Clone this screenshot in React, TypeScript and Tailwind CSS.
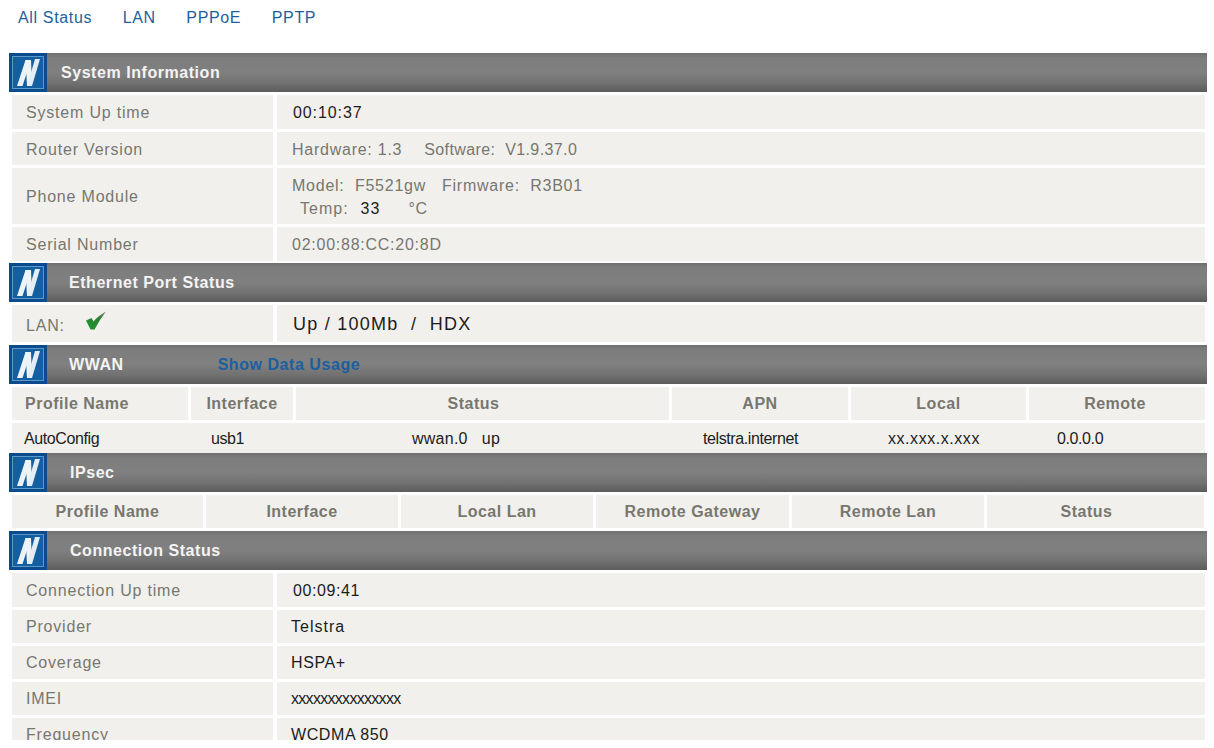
const Logo = () => (
  <svg width="38" height="39" viewBox="0 0 38 39" className="shrink-0 block">
    <rect width="38" height="39" fill="#0b4a8c" />
    <rect x="3.5" y="3.5" width="31" height="32" fill="#135f9f" stroke="#5c98c8" strokeWidth="1" />
    <path d="M8 33 L13.5 33 L22 7 L16.5 7 Z" fill="#eef3f8" />
    <path d="M16.5 7 L22 7 L23 33 L18 33 Z" fill="#eef3f8" />
    <path d="M18 33 L23 33 L31 6 L26 6 Z" fill="#e4ecf4" />
  </svg>
);

const Header = ({ title, indent, extra }: { title: string; indent: string; extra?: React.ReactNode }) => (
  <div className="flex h-[39px] w-[1198px] ml-[9px] items-center bg-[linear-gradient(to_bottom,#6f6f6f_0%,#7d7d7d_12%,#808080_50%,#707070_78%,#5c5c5c_100%)]">
    <Logo />
    <span className={`${indent} text-[16px] pt-[1px] font-bold text-[#f4f4f4] tracking-[0.55px] whitespace-nowrap`}>{title}</span>
    {extra}
  </div>
);

const Row = ({ label, h, children, tight = false }: { label: React.ReactNode; h: string; children: React.ReactNode; tight?: boolean }) => (
  <div className={`flex ${h} mt-[3px] ml-[12px] w-[1193px] gap-[4px]`}>
    <div className={`w-[261px] shrink-0 bg-[#f1f0ed] pl-[14px] ${tight ? "" : "pt-[2px]"} flex items-center text-[16px] text-[#77776f] tracking-[0.8px] whitespace-nowrap`}>{label}</div>
    <div className={`flex-1 bg-[#f1f0ed] pl-[14px] ${tight ? "" : "pt-[2px]"} flex items-center text-[16px] text-[#1c1c1c] tracking-[0.6px] whitespace-nowrap`}>{children}</div>
  </div>
);

const G = ({ children }: { children: React.ReactNode }) => <span className="text-[#77776f] tracking-[0.75px]">{children}</span>;

const HeadCell = ({ w, children, cls = "" }: { w: string; children: React.ReactNode; cls?: string }) => (
  <div className={`${w} ${cls} h-full bg-[#f1f0ed] flex items-center justify-center text-[16px] font-bold text-[#77776f] tracking-[0.5px] whitespace-nowrap`}>{children}</div>
);

export default function App() {
  return (
    <div className="h-[740px] w-[1214px] overflow-hidden bg-white font-['Liberation_Sans',Arial,sans-serif]">
      <div className="flex h-[53px] pl-[18px] pt-[8px] gap-[30.6px] text-[16px] leading-[20px] text-[#1b5f9e] tracking-[0.65px]">
        <span>All Status</span>
        <span>LAN</span>
        <span>PPPoE</span>
        <span>PPTP</span>
      </div>

      <Header title="System Information" indent="ml-[14px]" />
      <Row label="System Up time" h="h-[34px]"><span className="pl-[2px] tracking-[0.9px]">00:10:37</span></Row>
      <Row label="Router Version" h="h-[33px]">
        <span className="pl-[1px]"><G>Hardware: 1.3</G><G><span className="ml-[22px] tracking-[0.4px]">Software:&nbsp; V1.9.37.0</span></G></span>
      </Row>
      <Row label="Phone Module" h="h-[56px]">
        <div className="leading-[23px] pl-[1px]">
          <div><G>Model:&nbsp; F5521gw</G><G><span className="ml-[16px]">Firmware:&nbsp; R3B01</span></G></div>
          <div className="pl-[8px]"><G><span className="tracking-[1px]">Temp:</span></G><span className="ml-[12px] tracking-[1px]">33</span><G><span className="ml-[28px]">°C</span></G></div>
        </div>
      </Row>
      <Row label="Serial Number" h="h-[34px]"><span className="pl-[1px]"><G>02:00:88:CC:20:8D</G></span></Row>

      <div className="mt-[2px]"><Header title="Ethernet Port Status" indent="ml-[22px]" /></div>
      <Row label={<span className="flex items-center pt-[2px]">LAN:<svg width="22" height="20" viewBox="0 0 22 20" className="ml-[20px] -mt-[10px]"><defs><linearGradient id="chk" x1="0" y1="1" x2="1" y2="0"><stop offset="0" stopColor="#1e9a2e" /><stop offset="0.65" stopColor="#2d7d35" /><stop offset="1" stopColor="#7f8f7f" /></linearGradient></defs><path d="M1 9.5 L6.5 7 L8.5 10.5 Q13 5 21 0.5 Q15 8 9.5 18.5 L5.5 18.5 Z" fill="url(#chk)" /></svg></span>} h="h-[37px]">
        <span className="pl-[2px] text-[18px] tracking-[1.25px]">Up / 100Mb&nbsp; / &nbsp;HDX</span>
      </Row>

      <div className="mt-[3px]">
        <Header title="WWAN" indent="ml-[22px]" extra={<span className="ml-[94px] pt-[1px] text-[16px] font-bold text-[#1b5f9e] tracking-[0.55px]">Show Data Usage</span>} />
      </div>
      <div className="flex h-[33px] mt-[3px] ml-[12px] w-[1193px] gap-[3px]">
        <HeadCell w="w-[176px]" cls="!justify-start pl-[13px]">Profile Name</HeadCell>
        <HeadCell w="w-[102px]">Interface</HeadCell>
        <HeadCell w="w-[373px]" cls="pr-[18px]">Status</HeadCell>
        <HeadCell w="w-[176px]">APN</HeadCell>
        <HeadCell w="w-[175px]">Local</HeadCell>
        <HeadCell w="w-[176px]" cls="pr-[4px]">Remote</HeadCell>
      </div>
      <div className="flex h-[30px] mt-[3px] ml-[12px] w-[1193px] bg-[#f1f0ed] pt-[2px] items-center text-[16px] text-[#1c1c1c] tracking-[-0.4px] whitespace-nowrap">
        <span className="ml-[12px] w-[187px] shrink-0">AutoConfig</span>
        <span className="w-[201px] shrink-0">usb1</span>
        <span className="w-[291px] shrink-0 tracking-[0.25px]">wwan.0 &nbsp; up</span>
        <span className="w-[185px] shrink-0">telstra.internet</span>
        <span className="w-[169px] shrink-0 tracking-[0.55px]">xx.xxx.x.xxx</span>
        <span>0.0.0.0</span>
      </div>

      <Header title="IPsec" indent="ml-[23px]" />
      <div className="flex h-[33px] mt-[3px] ml-[12px] w-[1192px] gap-[3px]">
        <HeadCell w="w-[191px]">Profile Name</HeadCell>
        <HeadCell w="w-[192px]">Interface</HeadCell>
        <HeadCell w="w-[192px]">Local Lan</HeadCell>
        <HeadCell w="w-[193px]">Remote Gateway</HeadCell>
        <HeadCell w="w-[192px]">Remote Lan</HeadCell>
        <HeadCell w="w-[217px]" cls="pr-[18px]">Status</HeadCell>
      </div>

      <div className="mt-[3px]"><Header title="Connection Status" indent="ml-[23px]" /></div>
      <Row label="Connection Up time" h="h-[34px]"><span className="pl-[2px]">00:09:41</span></Row>
      <Row label="Provider" h="h-[33px]" tight><span className="tracking-[1px]">Telstra</span></Row>
      <Row label="Coverage" h="h-[33px]" tight>HSPA+</Row>
      <Row label="IMEI" h="h-[33px]" tight><span className="tracking-[-0.7px]">xxxxxxxxxxxxxxx</span></Row>
      <Row label="Frequency" h="h-[33px]" tight>WCDMA 850</Row>
    </div>
  );
}
